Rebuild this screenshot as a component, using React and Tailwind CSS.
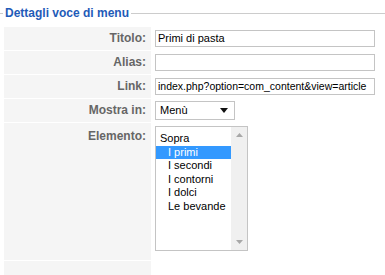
import React from "react";

const items = [
  { label: "Sopra", indent: false },
  { label: "I primi", indent: true, selected: true },
  { label: "I secondi", indent: true },
  { label: "I contorni", indent: true },
  { label: "I dolci", indent: true },
  { label: "Le bevande", indent: true },
];

const Row = ({ label, children, tall }) => (
  <div className="flex border-b border-white">
    <div
      className={`w-[147px] ml-[4px] bg-[#f5f5f5] pr-[5px] text-right font-bold text-[12px] text-[#666] ${
        tall ? "h-[137px] pt-[4px]" : "h-[23px] leading-[23px]"
      }`}
    >
      {label}
    </div>
    <div className={`pl-[4px] ${tall ? "pt-[3px]" : "flex items-center"}`}>
      {children}
    </div>
  </div>
);

const TextInput = ({ value, small }) => (
  <div
    className={`w-[220px] h-[17px] border border-[#c4c4c4] bg-white px-[2px] leading-[15px] text-black whitespace-nowrap overflow-hidden ${
      small ? "text-[10.5px]" : "text-[11px]"
    }`}
  >
    {value}
  </div>
);

const App = () => {
  return (
    <div
      className="w-[385px] h-[275px] bg-white overflow-hidden"
      style={{ fontFamily: '"Liberation Sans", Arial, sans-serif' }}
    >
      {/* legend */}
      <div className="flex items-center h-[26px]">
        <div className="w-[3px] h-px bg-[#ccc]" />
        <div className="px-[2px] font-bold text-[12px] text-[#1f5bb8]">
          Dettagli voce di menu
        </div>
        <div className="flex-1 h-px bg-[#ccc]" />
      </div>

      <div className="mt-px">
        <Row label="Titolo:">
          <TextInput value="Primi di pasta" />
        </Row>
        <Row label="Alias:">
          <TextInput value="" />
        </Row>
        <Row label="Link:">
          <TextInput value="index.php?option=com_content&view=article" small />
        </Row>
        <Row label="Mostra in:">
          <div className="w-[80px] h-[19px] border border-[#c4c4c4] bg-white flex items-center justify-between pl-[4px] pr-[6px] text-[11px] text-black">
            <span>Menù</span>
            <svg width="8" height="5" viewBox="0 0 8 5">
              <path d="M0 0 L8 0 L4 5 Z" fill="#111" />
            </svg>
          </div>
        </Row>
        <Row label="Elemento:" tall>
          <div className="w-[93px] h-[125px] border border-[#c4c4c4] bg-white flex">
            <div className="flex-1 pt-[5px] text-[11px] text-black leading-[13.5px]">
              {items.map((it) => (
                <div
                  key={it.label}
                  className={`${it.indent ? "pl-[12px]" : "pl-[4px]"} ${
                    it.selected ? "bg-[#3399ff] text-white" : ""
                  }`}
                >
                  {it.label}
                </div>
              ))}
            </div>
            <div className="w-[16px] bg-[#f0f0f0] flex flex-col justify-between items-center py-[6px]">
              <svg width="7" height="4" viewBox="0 0 7 4">
                <path d="M0 4 L7 4 L3.5 0 Z" fill="#a8a8a8" />
              </svg>
              <svg width="7" height="4" viewBox="0 0 7 4">
                <path d="M0 0 L7 0 L3.5 4 Z" fill="#a8a8a8" />
              </svg>
            </div>
          </div>
        </Row>
        <div className="flex">
          <div className="w-[147px] ml-[4px] h-[20px] bg-[#f5f5f5]" />
        </div>
      </div>
    </div>
  );
};

export default App;
